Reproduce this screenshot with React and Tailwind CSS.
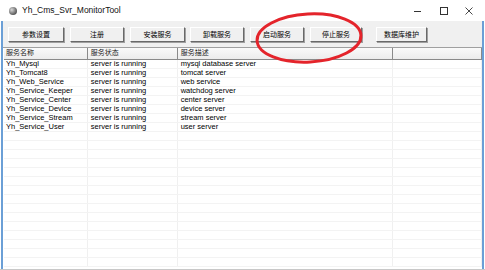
import React from "react";

const rows = [
  ["Yh_Mysql", "server is running", "mysql database server"],
  ["Yh_Tomcat8", "server is running", "tomcat server"],
  ["Yh_Web_Service", "server is running", "web service"],
  ["Yh_Service_Keeper", "server is running", "watchdog server"],
  ["Yh_Service_Center", "server is running", "center server"],
  ["Yh_Service_Device", "server is running", "device server"],
  ["Yh_Service_Stream", "server is running", "stream server"],
  ["Yh_Service_User", "server is running", "user server"],
];

const buttons = [
  ["参数设置", "w-[56px]", "ml-[5px]"],
  ["注册", "w-[54px]", "ml-[6px]"],
  ["安装服务", "w-[55px]", "ml-[6px]"],
  ["卸载服务", "w-[54px]", "ml-[5px]"],
  ["启动服务", "w-[54px]", "ml-[6px]"],
  ["停止服务", "w-[52px]", "ml-[6px]"],
  ["数据库维护", "w-[51px]", "ml-[14px]"],
];

function Cell({ w, children, last }) {
  return (
    <div
      className={`${w} h-full flex items-center pl-[2px] overflow-hidden whitespace-nowrap ${
        last ? "" : "border-r border-[#f0f0f0]"
      }`}
    >
      {children}
    </div>
  );
}

export default function App() {
  const empty = Array.from({ length: 15 });
  return (
    <div
      className="relative w-[485px] h-[270px] bg-white flex flex-col overflow-hidden"
      style={{ fontFamily: '"Liberation Sans", "Noto Sans CJK SC", sans-serif' }}
    >
      {/* title bar */}
      <div className="h-[21px] flex items-center bg-white shrink-0">
        <div className="ml-[9px] w-[8px] h-[8px] rounded-full bg-[radial-gradient(circle_at_35%_35%,#d8d8d8,#5a5a5a_70%,#303030)]" />
        <div className="ml-[5px] text-[8.5px] text-[#111] leading-none">Yh_Cms_Svr_MonitorTool</div>
        <div className="flex-1" />
        <div className="w-[7px] h-px bg-[#333] mr-[19px] mt-[1px]" />
        <div className="w-[8px] h-[8px] border border-[#333] mr-[17px]" />
        <svg width="8" height="8" viewBox="0 0 8 8" className="mr-[12px]">
          <path d="M0.5 0.5 L7.5 7.5 M7.5 0.5 L0.5 7.5" stroke="#333" strokeWidth="0.9" />
        </svg>
      </div>

      {/* body with blue frame */}
      <div className="flex-1 flex flex-col border-l-2 border-r-2 border-[#6b9fd6] ml-px mr-px min-h-0">
        {/* toolbar */}
        <div className="h-[27px] bg-[#f0f0f0] flex items-start pt-[6px] shrink-0 border-b border-[#a0a0a0]">
          {buttons.map(([t, w, m]) => (
            <div
              key={t}
              className={`${w} ${m} h-[15px] flex items-center justify-center bg-[#f0f0f0] border border-t-white border-l-white border-r-[#696969] border-b-[#696969] shadow-[1px_1px_0_#a0a0a0] text-[7px] text-black leading-none`}
            >
              {t}
            </div>
          ))}
        </div>

        {/* list view */}
        <div className="flex-1 flex flex-col bg-white min-h-0 pl-px">
          <div className="h-[12px] flex bg-[linear-gradient(#fafafa,#ececec)] border-b border-[#8a8a8a] text-[7px] text-[#222] shrink-0">
            <div className="w-[84px] flex items-end pb-[1px] pl-[2px] border-r border-[#8a8a8a]">服务名称</div>
            <div className="w-[90px] flex items-end pb-[1px] pl-[3px] border-r border-[#8a8a8a]">服务状态</div>
            <div className="w-[216px] flex items-end pb-[1px] pl-[3px] border-r border-[#8a8a8a]">服务描述</div>
            <div className="w-[89px] border-r border-[#8a8a8a]" />
          </div>
          <div className="flex-1 flex flex-col text-[7.5px] text-black leading-none">
            {rows.map((r) => (
              <div key={r[0]} className="h-[9px] flex border-b border-[#f3f3f3] shrink-0">
                <Cell w="w-[84px]">{r[0]}</Cell>
                <Cell w="w-[90px]">
                  <span className="pl-px">{r[1]}</span>
                </Cell>
                <Cell w="w-[216px]">
                  <span className="pl-px">{r[2]}</span>
                </Cell>
                <Cell w="w-[89px]" />
              </div>
            ))}
            {empty.map((_, i) => (
              <div key={i} className="h-[9px] flex border-b border-[#f3f3f3] shrink-0">
                <Cell w="w-[84px]" />
                <Cell w="w-[90px]" />
                <Cell w="w-[216px]" />
                <Cell w="w-[89px]" />
              </div>
            ))}
          </div>
        </div>
      </div>
      <div className="h-px bg-[#c8c8c8] shrink-0" />

      {/* red annotation ellipse */}
      <svg
        className="absolute left-0 top-0 pointer-events-none"
        width="485"
        height="270"
        viewBox="0 0 485 270"
      >
        <ellipse
          cx="309"
          cy="38"
          rx="52"
          ry="24"
          fill="none"
          stroke="#e4242b"
          strokeWidth="3"
          transform="rotate(-3 309 38)"
        />
      </svg>
    </div>
  );
}
